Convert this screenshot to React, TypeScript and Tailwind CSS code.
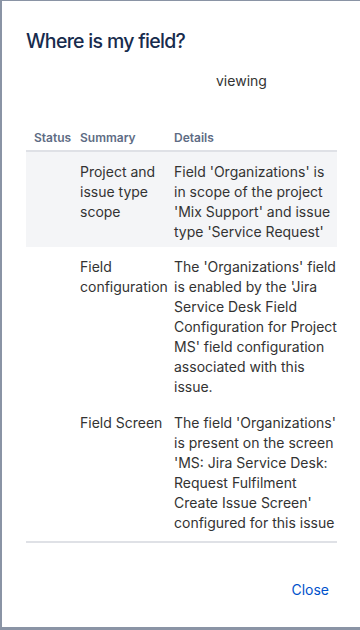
import React from "react";

const font = { fontFamily: 'Inter, "Noto Sans", "Liberation Sans", sans-serif' };

function Lines({ lines }: { lines: string[] }) {
  return (
    <>
      {lines.map((l, i) => (
        <div key={i} className="whitespace-nowrap">
          {l}
        </div>
      ))}
    </>
  );
}

const rows = [
  {
    summary: ["Project and", "issue type", "scope"],
    details: [
      "Field 'Organizations' is",
      "in scope of the project",
      "'Mix Support' and issue",
      "type 'Service Request'",
    ],
    cls: "bg-[#f4f5f7] pt-[10px] pb-[5px]",
  },
  {
    summary: ["Field", "configuration"],
    details: [
      "The 'Organizations' field",
      "is enabled by the 'Jira",
      "Service Desk Field",
      "Configuration for Project",
      "MS' field configuration",
      "associated with this",
      "issue.",
    ],
    cls: "pt-[10px] pb-[6px]",
  },
  {
    summary: ["Field Screen"],
    details: [
      "The field 'Organizations'",
      "is present on the screen",
      "'MS: Jira Service Desk:",
      "Request Fulfilment",
      "Create Issue Screen'",
      "configured for this issue",
    ],
    cls: "pt-[10px] pb-[8px] border-b-2 border-[#dfe1e6]",
  },
];

export default function App() {
  return (
    <div className="w-[360px] h-[630px] bg-[#8a94a5] overflow-hidden" style={font}>
      <div className="ml-[2px] mt-px w-[358px] h-[626px] bg-white flex flex-col">
        <div className="pl-[24px] pt-[28px]">
          <h2 className="text-[19.5px] leading-[24px] font-medium text-[#172b4d] tracking-[-0.7px]">
            Where is my field?
          </h2>
        </div>
        <div className="pl-[214px] mt-[18px] text-[14px] leading-[20px] text-[#333333]">viewing</div>
        <div className="ml-[24px] w-[311px] mt-[35px] text-[14px] leading-[20px] text-[#333333]">
          <div className="grid grid-cols-[49px_94px_1fr] pt-[4px] pb-[4px] border-b-2 border-[#dfe1e6] text-[12px] leading-[16px] font-semibold text-[#5e6c84]">
            <div className="pl-[8px]">Status</div>
            <div className="pl-[5px]">Summary</div>
            <div className="pl-[5px]">Details</div>
          </div>
          {rows.map((r, i) => (
            <div key={i} className={`grid grid-cols-[49px_94px_1fr] ${r.cls}`}>
              <div />
              <div className="pl-[5px]">
                <Lines lines={r.summary} />
              </div>
              <div className="pl-[5px]">
                <Lines lines={r.details} />
              </div>
            </div>
          ))}
        </div>
        <div className="flex justify-end pr-[31px] mt-[37px]">
          <span className="text-[14px] leading-[20px] text-[#0052cc]">Close</span>
        </div>
      </div>
    </div>
  );
}
